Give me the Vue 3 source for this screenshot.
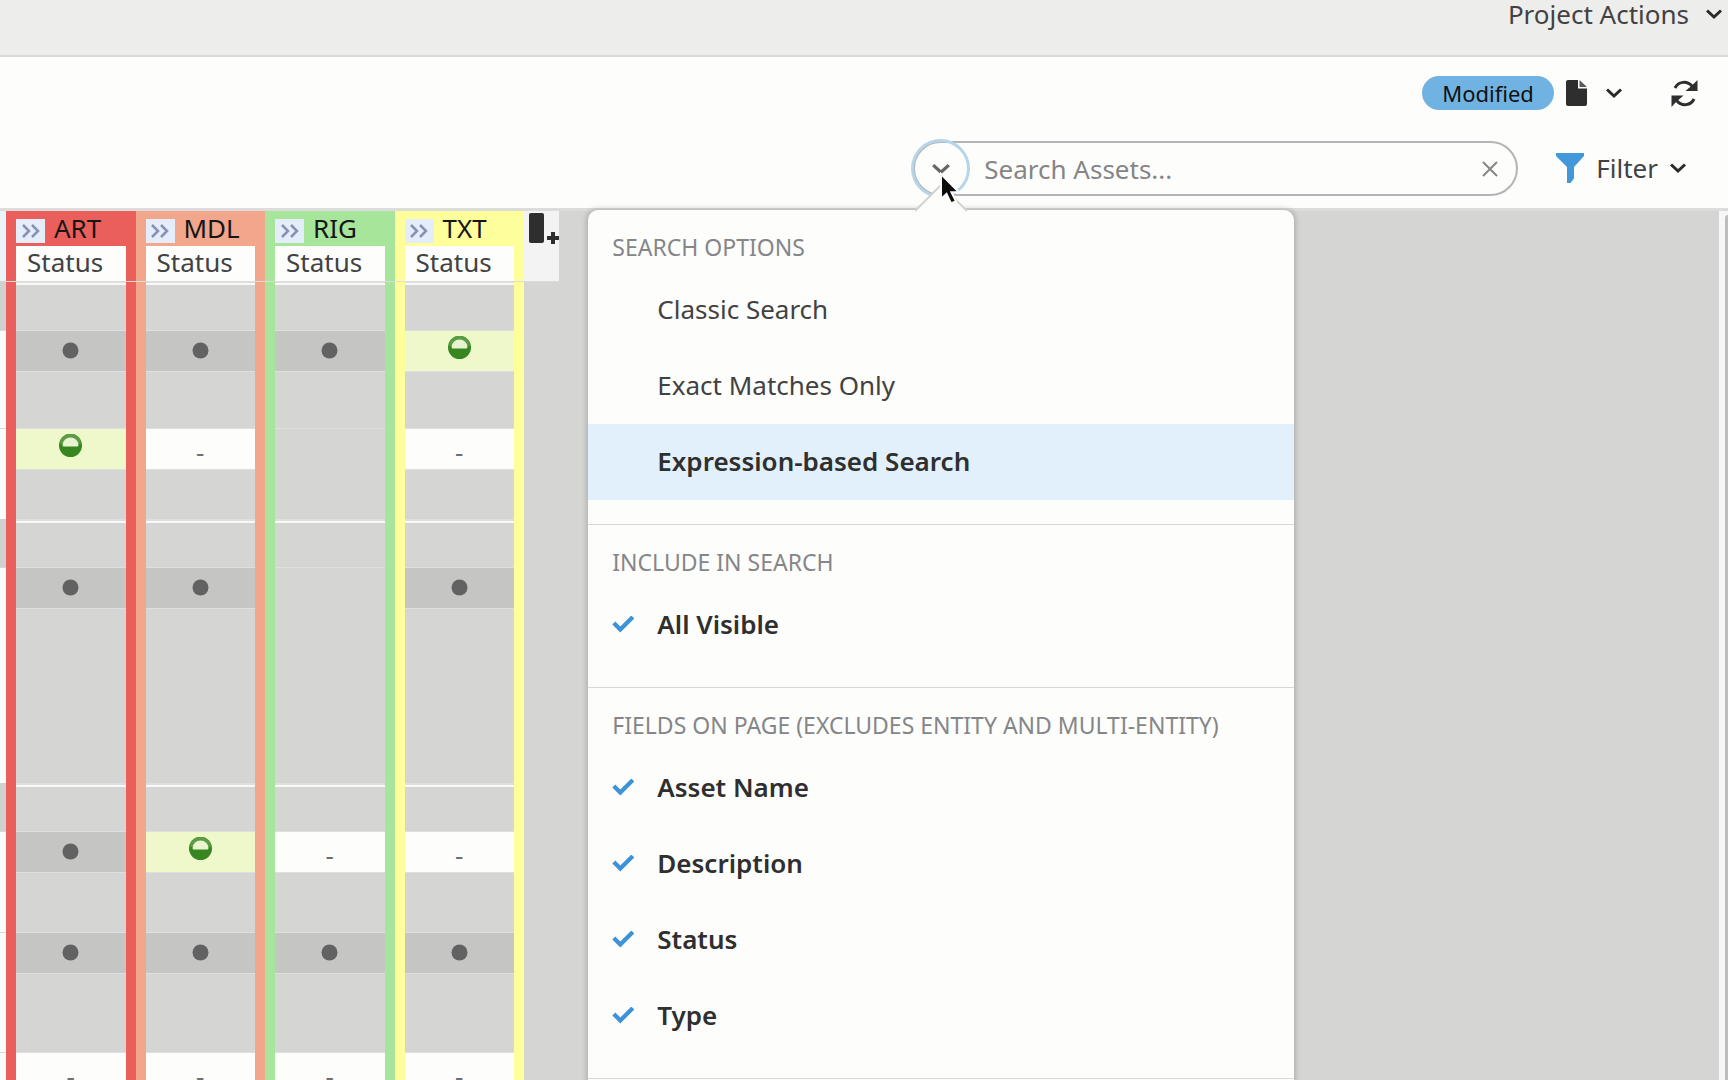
<script setup>
import { ref } from 'vue'

const steps = [
  { name: 'ART', tone: 'red' },
  { name: 'MDL', tone: 'orange' },
  { name: 'RIG', tone: 'green' },
  { name: 'TXT', tone: 'yellow' },
]

// kind: "group" = group header, "status" = pipeline statuses, "gap" = rest of an asset row
// open: index of the step that has no task, so its cell runs on without a line
const rows = [
  { kind: 'group', height: 49 },
  { kind: 'status', height: 41, cells: ['na', 'na', 'na', 'wip'] },
  { kind: 'gap', height: 57 },
  { kind: 'status', height: 41, cells: ['wip', 'wait', '', 'wait'] },
  { kind: 'gap', height: 50, open: 2 },
  { kind: 'group', height: 48 },
  { kind: 'status', height: 41, cells: ['na', 'na', '', 'na'] },
  { kind: 'gap', height: 175, open: 2 },
  { kind: 'group', height: 48 },
  { kind: 'status', height: 41, cells: ['na', 'wip', 'wait', 'wait'] },
  { kind: 'gap', height: 60 },
  { kind: 'status', height: 41, cells: ['na', 'na', 'na', 'na'] },
  { kind: 'gap', height: 79 },
  { kind: 'status', height: 41, cells: ['wait', 'wait', 'wait', 'wait'] },
]

const query = ref('')
const modes = ['Classic Search', 'Exact Matches Only', 'Expression-based Search']
const mode = ref(modes[2])
const allVisible = ref(true)
const fields = ref([
  { name: 'Asset Name', on: true },
  { name: 'Description', on: true },
  { name: 'Status', on: true },
  { name: 'Type', on: true },
])
</script>

<template>
  <div class="page">
    <header class="topbar">
      <button class="plain" type="button">
        Project Actions
        <svg class="chev" viewBox="0 0 18 12"><path d="M2 2.500 9 9 16 2.500" /></svg>
      </button>
    </header>

    <div class="tools tools-view">
      <button class="pill" type="button">Modified</button>
      <button class="plain view" type="button" aria-label="Page view">
        <svg width="21" height="26" viewBox="0 0 21 26">
          <path d="M2 0h10v8.500h9V24a2 2 0 0 1-2 2H2a2 2 0 0 1-2-2V2a2 2 0 0 1 2-2z" fill="#2e2e2e" />
          <path d="M13.500 0 21 7h-7.500z" fill="#5a5a5a" />
        </svg>
        <svg class="chev" viewBox="0 0 18 12"><path d="M2 2.500 9 9 16 2.500" /></svg>
      </button>
      <button class="plain" type="button" aria-label="Refresh">
        <svg width="27" height="27" viewBox="0 0 27 27" fill="none" stroke="#2e2e2e" stroke-width="3">
          <path d="M4 8C7 1.500 16 0 21.500 6.500" />
          <path d="M26.500 0v11H14.500l4-3.500 4-3.500z" fill="#2e2e2e" stroke="none" />
          <path d="M23 19c-3 6.500-12 8-17.500 1.500" />
          <path d="M.5 27V15.500h12l-4 3.500-4 3.500z" fill="#2e2e2e" stroke="none" />
        </svg>
      </button>
    </div>

    <div class="tools tools-search">
      <div class="search">
        <button class="mode" type="button" aria-label="Search options">
          <svg class="chev" viewBox="0 0 18 12"><path d="M2 2.500 9 9 16 2.500" /></svg>
        </button>
        <input v-model="query" type="text" placeholder="Search Assets..." aria-label="Search Assets" />
        <button class="plain clear" type="button" aria-label="Clear" @click="query = ''">
          <svg width="16" height="16" viewBox="0 0 16 16"><path d="M1 1l14 14M15 1 1 15" stroke="#858585" stroke-width="2" /></svg>
        </button>

        <div class="menu">
          <svg class="arrow" width="52" height="28" viewBox="0 0 52 28">
            <path d="M0 28 26 1l26 27z" fill="#fdfdfc" />
            <path d="M0 27 26 1l26 26" fill="none" stroke="#d2d2d2" stroke-width="2" />
          </svg>
          <fieldset>
            <legend>SEARCH OPTIONS</legend>
            <label v-for="m in modes" :key="m" :class="{ active: mode === m }">
              <input v-model="mode" type="radio" name="mode" :value="m" />{{ m }}
            </label>
          </fieldset>
          <fieldset>
            <legend>INCLUDE IN SEARCH</legend>
            <label><input v-model="allVisible" type="checkbox" />All Visible</label>
          </fieldset>
          <fieldset>
            <legend>FIELDS ON PAGE (EXCLUDES ENTITY AND MULTI-ENTITY)</legend>
            <label v-for="f in fields" :key="f.name"><input v-model="f.on" type="checkbox" />{{ f.name }}</label>
          </fieldset>
        </div>

        <svg class="cursor" width="24" height="34" viewBox="0 0 24 34">
          <path d="M2 2v25l5.500-5 4.500 9.500 5-2.300-4.500-9H20z" fill="#0c0c0c" stroke="#fff" stroke-width="2" />
        </svg>
      </div>
      <button class="plain filter" type="button">
        <svg width="30" height="32" viewBox="0 0 30 32">
          <path d="M1 1h28v3L19 15v11.500L15.500 31H12V15L1 4z" fill="#4298d9" />
        </svg>
        Filter
        <svg class="chev" viewBox="0 0 18 12"><path d="M2 2.500 9 9 16 2.500" /></svg>
      </button>
    </div>

    <main class="board">
      <table>
        <colgroup>
          <col class="c-edge" />
          <col v-for="s in steps" :key="s.name" />
          <col class="c-add" />
        </colgroup>
        <thead>
          <tr class="names">
            <td class="edge" rowspan="2"></td>
            <th v-for="s in steps" :key="s.name" :class="s.tone" scope="col">
              <div class="step">
                <button type="button" :aria-label="'Expand ' + s.name">
                  <svg width="20" height="14" viewBox="0 0 20 14" fill="none" stroke="#8791b5" stroke-width="2.500">
                    <path d="M2 1l6 6-6 6M11 1l6 6-6 6" />
                  </svg>
                </button>
                {{ s.name }}
              </div>
            </th>
            <td class="add" rowspan="2">
              <button type="button" aria-label="Add column">
                <svg width="34" height="34" viewBox="0 0 34 34" fill="#2e2e2e">
                  <rect x="4" y="2" width="15" height="30" rx="2" />
                  <path d="M26 21h4v4h4v4h-4v4h-4v-4h-4v-4h4z" />
                </svg>
              </button>
            </td>
          </tr>
          <tr class="labels">
            <th v-for="s in steps" :key="s.name" :class="s.tone" scope="col">Status</th>
          </tr>
        </thead>
        <tbody>
          <tr v-for="(r, i) in rows" :key="i" :class="r.kind" :style="{ height: r.height + 'px' }">
            <td class="edge"></td>
            <td
              v-for="(s, j) in steps"
              :key="s.name"
              class="cell"
              :class="[s.tone, r.cells && r.cells[j], { open: r.open === j }]"
            >
              <template v-if="r.cells">
                <svg v-if="r.cells[j] === 'na'" width="17" height="17" viewBox="0 0 17 17">
                  <circle cx="8.500" cy="8.500" r="8" fill="#626262" />
                </svg>
                <svg v-else-if="r.cells[j] === 'wip'" width="23" height="23" viewBox="0 0 23 23">
                  <circle cx="11.500" cy="11.500" r="11.500" fill="#37861f" />
                  <path d="M1 10a10.500 10.500 0 0 1 21 0z" fill="#5a9d45" />
                  <path d="M3.500 11a8 7.500 0 0 1 16 0q0 1.500-1.500 1.500H5q-1.500 0-1.500-1.500z" fill="#eaf3d0" />
                </svg>
                <template v-else-if="r.cells[j] === 'wait'">-</template>
              </template>
            </td>
            <td></td>
          </tr>
        </tbody>
      </table>
      <div class="track"><div class="thumb"></div></div>
    </main>
  </div>
</template>

<style>
body {
  margin: 0;
  background: #fdfdfc;
}
</style>

<style scoped>
.page {
  display: flex;
  flex-direction: column;
  height: 100vh;
  overflow: hidden;
  background: #fdfdfc;
  color: #424242;
  font: 26px/28px "Noto Sans", sans-serif;
}
button,
input {
  font: inherit;
  color: inherit;
}
button {
  padding: 0;
  border: 0;
  background: none;
}
svg {
  display: block;
  flex: none;
}
.chev {
  width: 18px;
  height: 12px;
  fill: none;
  stroke: #2a2a2a;
  stroke-width: 3px;
}
.plain {
  display: flex;
  align-items: center;
}
.topbar {
  display: flex;
  flex: none;
  justify-content: flex-end;
  align-items: flex-start;
  box-sizing: border-box;
  height: 57px;
  padding-right: 5px;
  border-bottom: 2px solid #d9d9d9;
  background: #ededec;
}
.topbar .plain {
  gap: 16px;
}
.tools {
  display: flex;
  flex: none;
  justify-content: flex-end;
  align-items: center;
}
.tools-view {
  height: 72px;
  padding-right: 30px;
}
.pill {
  width: 132px;
  height: 34px;
  margin-right: 12px;
  border-radius: 17px;
  background: #70b3e2;
  color: #111;
  font-size: 22px;
  line-height: 32px;
}
.view {
  gap: 18px;
  margin-right: 48px;
}
.tools-search {
  height: 79px;
  padding-right: 41px;
}
.search {
  position: relative;
  display: flex;
  align-items: center;
  box-sizing: border-box;
  width: 605px;
  height: 55px;
  margin-right: 37px;
  border: 2px solid #b4b4b6;
  border-radius: 28px;
}
.mode {
  display: flex;
  flex: none;
  justify-content: center;
  align-items: center;
  box-sizing: border-box;
  width: 59px;
  height: 59px;
  margin-left: -4px;
  border: 3px solid #b4d5ea;
  border-radius: 50%;
}
.mode .chev {
  width: 20px;
  height: 14px;
  stroke: #666;
}
.search > input {
  flex: 1;
  min-width: 0;
  padding: 0;
  margin-left: 14px;
  border: 0;
  outline: 0;
  background: none;
}
.search > input::placeholder {
  color: #858585;
  opacity: 1;
}
.clear {
  margin-right: 18px;
}
.filter {
  gap: 11px;
  padding-bottom: 2px;
}
.menu {
  position: absolute;
  z-index: 2;
  top: 67px;
  left: -327px;
  width: 706px;
  height: 900px;
  border-radius: 10px;
  background: #fdfdfc;
  box-shadow: 0 0 5px 2px rgba(0, 0, 0, 0.16);
}
.arrow {
  position: absolute;
  top: -26px;
  left: 327px;
}
fieldset {
  min-width: 0;
  margin: 0;
  padding: 0 0 24px;
  border: 0;
  border-bottom: 1px solid #d8d8d8;
}
legend {
  padding: 22px 24px 10px;
  color: #858688;
  font-size: 23px;
  line-height: 30px;
}
label {
  display: flex;
  align-items: center;
  box-sizing: border-box;
  height: 76px;
  padding: 0 0 2px 24px;
}
label input {
  appearance: none;
  width: 22px;
  height: 17px;
  margin: 0 23px 0 0;
}
label:has([type='checkbox']:checked),
.active {
  color: #2f2f2f;
  font-weight: 600;
}
label [type='checkbox']:checked {
  background: #3d93d9;
  clip-path: polygon(0 9px, 3px 6px, 8px 11px, 19px 0, 22px 3px, 8px 17px);
}
.active {
  background: #e1f0fb;
}
.cursor {
  position: absolute;
  z-index: 3;
  top: 29px;
  left: 24px;
}
.board {
  display: flex;
  flex: 1;
  justify-content: space-between;
  align-items: flex-start;
  min-height: 0;
  border-top: 3px solid #dcdcdc;
  background: #d5d5d4;
}
table {
  width: 559px;
  table-layout: fixed;
  border-collapse: separate;
  border-spacing: 0;
}
td,
th {
  box-sizing: border-box;
  padding: 0;
  text-align: center;
  font-weight: 400;
}
.c-edge {
  width: 6px;
}
.c-add {
  width: 35px;
}
.red {
  --tone: #ea5f5c;
}
.orange {
  --tone: #f2a68b;
}
.green {
  --tone: #a6e59a;
}
.yellow {
  --tone: #fefe9a;
}
.names {
  height: 35px;
}
.names th {
  padding: 0 0 2px 10px;
  background: var(--tone);
  color: #161616;
}
.step {
  display: flex;
  align-items: center;
  gap: 9px;
}
.step button {
  display: flex;
  justify-content: center;
  align-items: center;
  width: 29px;
  height: 24px;
  margin-top: 6px;
  background: #e4edf9;
}
.labels {
  height: 35px;
}
.labels th {
  padding: 0 0 4px 11px;
  border: solid var(--tone);
  border-width: 0 10px;
  background: #fdfdfc;
  text-align: left;
}
.labels th,
.add {
  position: relative;
  box-shadow: 0 1px #dedcda;
}
thead .edge {
  background: #e8f4fa;
}
.add {
  background: #f3f3f3;
  vertical-align: top;
}
.cell {
  border: solid var(--tone);
  border-width: 0 10px;
  background: #d5d5d4;
  box-shadow: inset 0 1px #dfdfe0;
}
.cell.open {
  box-shadow: none;
}
.group .cell {
  background: linear-gradient(#dfdfde 2px, #f8f8f8 2px 4px, #d5d5d4 4px);
}
.cell.na {
  background: #c5c5c4;
}
.cell.wip {
  padding-bottom: 6px;
  background: #eff8cb;
}
.cell.wait {
  padding-top: 6px;
  background: #fdfdfc;
  color: #6f6f6f;
}
td svg {
  margin: 0 auto;
}
.status .edge {
  background: #fdfdfc;
  box-shadow: inset 0 1px #d8d8d8;
}
.gap .edge {
  background: #fdfdfc;
}
.group .edge {
  background: #cfd1d1;
}
.track {
  display: flex;
  justify-content: flex-end;
  align-self: stretch;
  width: 9px;
  background: #f7f7f8;
}
.thumb {
  width: 3px;
  margin-top: 4px;
  border-top-left-radius: 4px;
  background: #bdbdbd;
}
</style>
